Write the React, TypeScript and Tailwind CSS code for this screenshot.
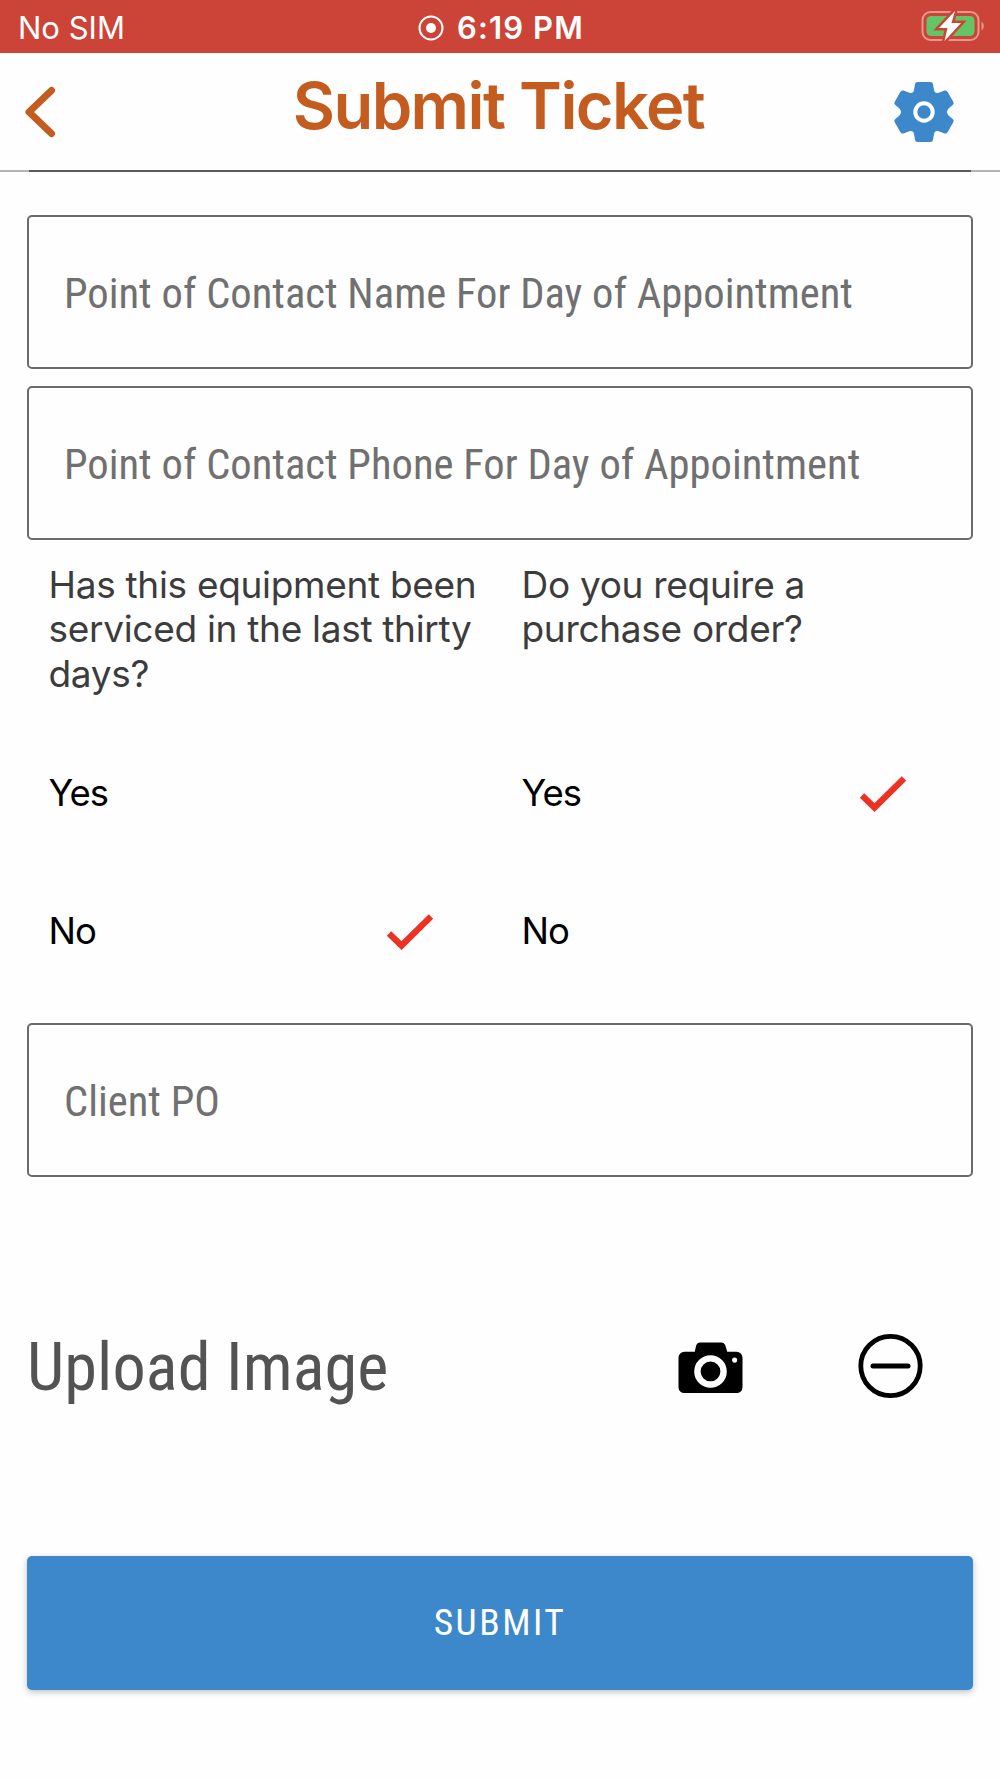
import React, { useState } from 'react';

type Answer = 'Yes' | 'No';

interface FieldProps {
  label: string;
  className?: string;
}

interface QuestionProps {
  label: string;
  value: Answer;
  onChange: (value: Answer) => void;
}

const options: Answer[] = ['Yes', 'No'];

function StatusBar() {
  return (
    <div className="grid h-[53px] shrink-0 grid-cols-3 items-center bg-[#cc4437] pb-px text-[31px] leading-none text-white">
      <span className="pt-[3px] pl-[18px]">No SIM</span>
      <div className="flex items-center justify-center gap-[13px] pt-[3px] pl-[2px] font-semibold">
        <svg className="size-[26px]" viewBox="0 0 26 26" fill="none">
          <circle cx="13" cy="13" r="11.5" stroke="#fff" strokeWidth="2" />
          <circle cx="13" cy="13" r="5" fill="#fff" />
        </svg>
        <span className="tracking-[1.1px]">6:19 PM</span>
      </div>
      <svg className="mr-[15px] h-[32px] w-[64px] justify-self-end" viewBox="0 0 64 32" fill="none">
        <rect x="1.5" y="2" width="56" height="28" rx="8" stroke="#fff" strokeOpacity=".45" strokeWidth="2" />
        <path d="M60.5 11.5c3 2 3 7 0 9z" fill="#fff" fillOpacity=".45" />
        <rect x="5.5" y="6" width="48" height="20" rx="4.5" fill="#65c466" />
        <path d="M34 1L18 18h8.5l-3 13 16.5-18h-9.5z" fill="#fff" stroke="#cc4437" strokeWidth="5" />
        <path d="M34 1L18 18h8.5l-3 13 16.5-18h-9.5z" fill="#fff" />
      </svg>
    </div>
  );
}

function Header() {
  return (
    <header className="flex h-[119px] shrink-0 items-center justify-between border-b-2 border-[#b4b4b4] pr-[43px] pl-[24px]">
      <button className="w-[66px]">
        <svg className="h-[52px] w-[32px]" viewBox="0 0 32 52" fill="none">
          <path d="M27.5 4.5L5 26L27.5 47.500" stroke="#c55c1f" strokeWidth="7" strokeLinecap="round" strokeLinejoin="round" />
        </svg>
      </button>
      <h1 className="pb-[13px] pl-[16px] text-[65px] leading-none font-semibold tracking-[-1.6px] text-[#c55c1f]">Submit Ticket</h1>
      <button className="w-[66px]">
        <svg className="size-[66px]" viewBox="-33 -33 66 66">
          <path
            d="M-6.5-30H6.5Q8.5-30 9-28L10-22Q10.500-18.500 14-19L20.500-21.500Q22.500-22 23.700-20L29.400-10Q30.200-8.200 28.700-7L24.500-3.500Q21.500 0 24.500 3.500L28.700 7Q30.200 8.200 29.400 10L23.700 20Q22.500 22 20.500 21.500L14 19Q10.500 18.500 10 22L9 28Q8.500 30 6.500 30H-6.500Q-8.500 30-9 28L-10 22Q-10.500 18.500-14 19L-20.500 21.500Q-22.500 22-23.700 20L-29.400 10Q-30.200 8.200-28.700 7L-24.500 3.500Q-21.500 0-24.500-3.500L-28.700-7Q-30.200-8.200-29.400-10L-23.700-20Q-22.500-22-20.500-21.500L-14-19Q-10.500-18.500-10-22L-9-28Q-8.500-30-6.500-30z"
            fill="#3c88ca"
          />
          <circle r="8.700" fill="none" stroke="#fefefe" strokeWidth="4" />
        </svg>
      </button>
    </header>
  );
}

function Field({ label, className = '' }: FieldProps) {
  return (
    <div className={`flex h-[154px] items-center rounded-[5px] border-2 border-[#6b6b6b] pt-[3px] pl-[35px] ${className}`}>
      <span className="font-[Roboto,sans-serif] text-[42.6px] leading-none text-[#707070] [font-stretch:75%]">{label}</span>
    </div>
  );
}

function Question({ label, value, onChange }: QuestionProps) {
  return (
    <div className="pt-[23px] pl-[21.5px]">
      <p className="h-[160px] pr-[10px] text-[37px] leading-[44.5px] tracking-[-0.3px] text-[#3c3c3c]">{label}</p>
      {options.map((option) => (
        <button
          key={option}
          className="flex h-[138.5px] w-full items-center justify-between pt-[2px] pr-[66px] text-[36.5px] leading-none tracking-[-1px] text-black"
          onClick={() => onChange(option)}
        >
          {option}
          {value === option && (
            <svg className="mt-[2px] h-[38px] w-[48px]" viewBox="0 0 48 38" fill="none">
              <path d="M3 20.5L15.5 32.5L45 3.5" stroke="#eb3223" strokeWidth="6.3" />
            </svg>
          )}
        </button>
      ))}
    </div>
  );
}

export default function App() {
  const [serviced, setServiced] = useState<Answer>('No');
  const [purchaseOrder, setPurchaseOrder] = useState<Answer>('Yes');

  return (
    <div className="flex h-[1778px] w-[1000px] flex-col overflow-hidden bg-[#fefefe] font-[Inter,sans-serif]">
      <StatusBar />
      <Header />

      <main className="flex flex-col px-[27px]">
        {/* bottom edge of the field scrolled under the header */}
        <div className="mx-[2px] -mt-[2px] h-[2px] bg-[#5a5a5a]" />

        <Field label="Point of Contact Name For Day of Appointment" className="mt-[43px]" />
        <Field label="Point of Contact Phone For Day of Appointment" className="mt-[16.5px]" />

        <div className="grid h-[483px] grid-cols-2">
          <Question label="Has this equipment been serviced in the last thirty days?" value={serviced} onChange={setServiced} />
          <Question label="Do you require a purchase order?" value={purchaseOrder} onChange={setPurchaseOrder} />
        </div>

        <Field label="Client PO" />

        <div className="mt-[155.5px] flex h-[68px] items-center pr-[50px]">
          <h2 className="flex-1 pt-[2px] font-[Roboto,sans-serif] text-[66.3px] leading-none tracking-[0.1px] text-[#535353] [font-stretch:75%]">
            Upload Image
          </h2>
          <button className="mr-[114.5px] pt-[3px]">
            <svg className="h-[54px] w-[65px]" viewBox="0 0 66 54">
              <path
                d="M22 1h22q3 0 4 3l2 6.5h9.5a6 6 0 0 1 6 6v30a6 6 0 0 1-6 6H6.5a6 6 0 0 1-6-6v-30a6 6 0 0 1 6-6H17l1.5-6.5q1-3 3.500-3z"
                fill="#000"
              />
              <circle cx="33" cy="30.5" r="13.3" fill="none" stroke="#fefefe" strokeWidth="6.5" />
              <circle cx="57.5" cy="19" r="2.6" fill="#fefefe" />
            </svg>
          </button>
          <button>
            <svg className="size-[66px]" viewBox="0 0 66 66" fill="none" stroke="#000" strokeLinecap="round">
              <circle cx="33.5" cy="33" r="29.7" strokeWidth="4.8" />
              <path d="M16 33h35" strokeWidth="5" />
            </svg>
          </button>
        </div>

        <button className="mt-[156px] h-[134px] rounded-[5px] bg-[#3c88ca] font-[Roboto,sans-serif] text-[37.5px] leading-none font-normal tracking-[2.5px] text-white shadow-[0_2px_6px_rgba(0,0,0,0.25)] [font-stretch:75%]">
          SUBMIT
        </button>
      </main>
    </div>
  );
}
